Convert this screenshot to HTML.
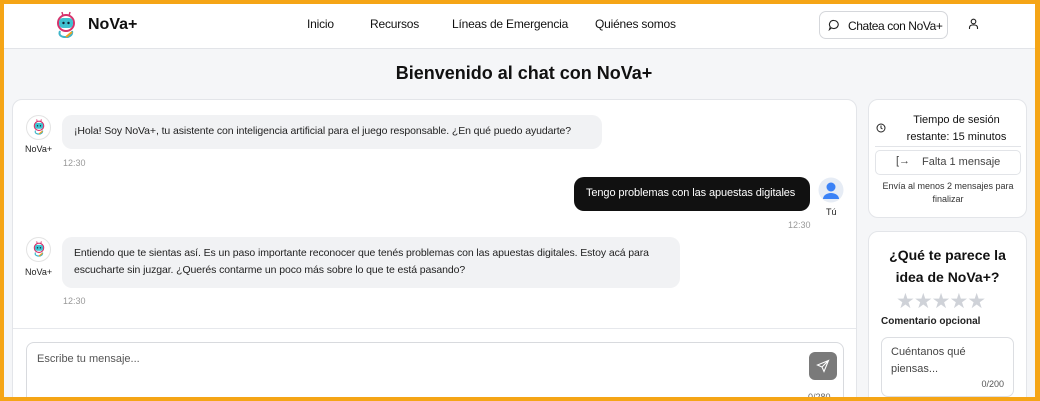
<!DOCTYPE html>
<html><head><meta charset="utf-8"><style>
*{box-sizing:border-box;margin:0;padding:0}
body{width:1040px;height:401px;overflow:hidden;font-family:"Liberation Sans",sans-serif;background:#f5a516;position:relative;color:#111}
.page{position:absolute;left:4px;top:4px;width:1031px;height:393px;background:#f5f6f8;overflow:hidden}
.hdr{position:absolute;left:0;top:0;width:100%;height:45px;background:#fff;border-bottom:1px solid #e2e4e8}
.abs{position:absolute;white-space:nowrap}
.nav{font-size:12px;top:13px;letter-spacing:-0.2px}
.card{position:absolute;background:#fff;border:1px solid #e3e5e9;border-radius:10px}
.bub{position:absolute;background:#f1f2f4;border-radius:10px;font-size:10.5px;line-height:17px;padding:8px 12px;color:#222;letter-spacing:-0.1px}
.t{position:absolute;font-size:9px;color:#999}
.av{position:absolute;width:25px;height:25px;border-radius:50%;border:1px solid #e3e3e3;background:#fff}
.lbl{position:absolute;font-size:9px;color:#222}
.star{color:#cfd2d8;font-size:21px;letter-spacing:-1px}
</style></head><body><div class="page">
<svg width="0" height="0" style="position:absolute"><defs><g id="bot"><line x1="8" y1="2" x2="9" y2="6" stroke="#d6336c" stroke-width="1.5"/><line x1="16" y1="2" x2="15" y2="6" stroke="#d6336c" stroke-width="1.5"/><circle cx="12" cy="13" r="8" fill="none" stroke="#d6336c" stroke-width="2"/><rect x="5" y="8" width="14" height="10" rx="4" fill="#3fc1d0"/><circle cx="9.5" cy="13" r="1.2" fill="#123"/><circle cx="14.5" cy="13" r="1.2" fill="#123"/><path d="M6 21 Q4 26 10 27 L14 27 Q19 25 18 21" fill="none" stroke="#3fb5c9" stroke-width="2"/><path d="M12 27 L18 22" stroke="#f0a020" stroke-width="2"/></g></defs></svg>
<div class="hdr">
 <svg class="abs" style="left:50px;top:6px" width="24" height="30" viewBox="0 0 24 30"><use href="#bot"/></svg>
 <div class="abs" style="left:84px;top:12px;font-size:16px;font-weight:bold">NoVa+</div>
 <div class="abs nav" style="left:303px">Inicio</div>
 <div class="abs nav" style="left:366px">Recursos</div>
 <div class="abs nav" style="left:448px">Líneas de Emergencia</div>
 <div class="abs nav" style="left:591px">Quiénes somos</div>
 <div class="abs" style="left:815px;top:7px;width:129px;height:28px;border:1px solid #d5d7db;border-radius:7px;font-size:12px;padding:7px 0 0 28px;letter-spacing:-0.4px">Chatea con NoVa+</div>
 <svg class="abs" style="left:824px;top:15px" width="12" height="12" viewBox="0 0 12 12"><path d="M6 1.5a4.3 4 0 1 1-2.5 7.3L1.5 10.5l.8-2.6A4 4 0 0 1 6 1.5z" fill="none" stroke="#222" stroke-width="1.1"/></svg>
 <svg class="abs" style="left:964px;top:14px" width="11" height="12" viewBox="0 0 11 12"><circle cx="5.5" cy="3.5" r="2.3" fill="none" stroke="#222" stroke-width="1.1"/><path d="M1.5 11v-1.5a3 2.5 0 0 1 3-2.5h2a3 2.5 0 0 1 3 2.5V11" fill="none" stroke="#222" stroke-width="1.1"/></svg>
</div>
<div class="abs" style="left:0;width:1040px;top:59px;text-align:center;font-size:18px;font-weight:bold">Bienvenido al chat con NoVa+</div>
<div class="card" style="left:8px;top:95px;width:845px;height:310px">
 <div class="av" style="left:13px;top:15px"></div>
 <svg class="abs" style="left:19px;top:18px" width="14" height="18" viewBox="0 0 24 30"><use href="#bot"/></svg>
 <div class="lbl" style="left:12px;top:44px">NoVa+</div>
 <div class="bub" style="left:49px;top:15px;width:540px;height:34px">¡Hola! Soy NoVa+, tu asistente con inteligencia artificial para el juego responsable. ¿En qué puedo ayudarte?</div>
 <div class="t" style="left:50px;top:58px">12:30</div>
 <div class="bub" style="left:561px;top:77px;width:236px;height:34px;background:#111;color:#fff;white-space:nowrap;font-size:11px">Tengo problemas con las apuestas digitales</div>
 <svg class="abs" style="left:805px;top:77px" width="26" height="26" viewBox="0 0 26 26"><circle cx="13" cy="13" r="12.5" fill="#e6ecf5"/><circle cx="13" cy="10" r="4.5" fill="#3b82f6"/><path d="M5 22a8 6 0 0 1 16 0z" fill="#3b82f6"/></svg>
 <div class="lbl" style="left:813px;top:107px">Tú</div>
 <div class="t" style="left:775px;top:120px">12:30</div>
 <div class="av" style="left:13px;top:137px"></div>
 <svg class="abs" style="left:19px;top:140px" width="14" height="18" viewBox="0 0 24 30"><use href="#bot"/></svg>
 <div class="lbl" style="left:12px;top:167px">NoVa+</div>
 <div class="bub" style="left:49px;top:137px;width:618px;height:51px">Entiendo que te sientas así. Es un paso importante reconocer que tenés problemas con las apuestas digitales. Estoy acá para escucharte sin juzgar. ¿Querés contarme un poco más sobre lo que te está pasando?</div>
 <div class="t" style="left:50px;top:196px">12:30</div>
 <div class="abs" style="left:0;top:228px;width:100%;border-top:1px solid #e6e8ec"></div>
 <div class="abs" style="left:13px;top:242px;width:818px;height:70px;border:1px solid #d8dade;border-radius:8px;font-size:11px;color:#555;padding:10px 10px">Escribe tu mensaje...</div>
 <div class="abs" style="left:796px;top:252px;width:28px;height:28px;background:#7a7a7a;border-radius:6px"></div>
 <svg class="abs" style="left:803px;top:259px" width="14" height="14" viewBox="0 0 14 14"><path d="M12.5 1.5L1.5 6l4.5 2 2 4.5z M6 8l6.5-6.5" fill="none" stroke="#fff" stroke-width="1.1"/></svg>
 <div class="t" style="left:795px;top:292px;color:#666">0/280</div>
</div>
<div class="card" style="left:864px;top:95px;width:159px;height:119px">
 <svg class="abs" style="left:7px;top:23px" width="10" height="10" viewBox="0 0 10 10"><circle cx="5" cy="5" r="4" fill="none" stroke="#222" stroke-width="1"/><path d="M5 2.5V5l1.5 1" fill="none" stroke="#222"/></svg>
 <div class="abs" style="left:25px;top:12px;width:125px;text-align:center;font-size:11px;line-height:17px;white-space:normal">Tiempo de sesión restante: 15 minutos</div>
 <div class="abs" style="left:6px;top:46px;width:146px;border-top:1px solid #e2e4e8"></div>
 <div class="abs" style="left:6px;top:50px;width:146px;height:25px;border:1px solid #e2e4e8;border-radius:5px;font-size:11px;color:#444;padding:5px 0 0 46px">Falta 1 mensaje</div>
 <div class="abs" style="left:27px;top:55px;font-size:11px;color:#444">[→</div>
 <div class="abs" style="left:4px;top:80px;width:150px;text-align:center;font-size:9px;line-height:13px;color:#333;white-space:normal">Envía al menos 2 mensajes para finalizar</div>
</div>
<div class="card" style="left:864px;top:227px;width:159px;height:190px">
 <div class="abs" style="left:0;top:12px;width:157px;text-align:center;font-size:14px;font-weight:bold;line-height:22px">¿Qué te parece la<br>idea de NoVa+?</div>
 <div class="abs star" style="left:27px;top:57px">★★★★★</div>
 <div class="abs" style="left:12px;top:84px;font-size:10px;font-weight:bold;color:#222">Comentario opcional</div>
 <div class="abs" style="left:12px;top:105px;width:133px;height:60px;border:1px solid #dcdee2;border-radius:7px;font-size:11px;color:#444;line-height:17px;padding:6px 9px;white-space:normal">Cuéntanos qué piensas...<div style="text-align:right;font-size:9px;color:#555;margin-top:-2px">0/200</div></div>
</div>
</div></body></html>
